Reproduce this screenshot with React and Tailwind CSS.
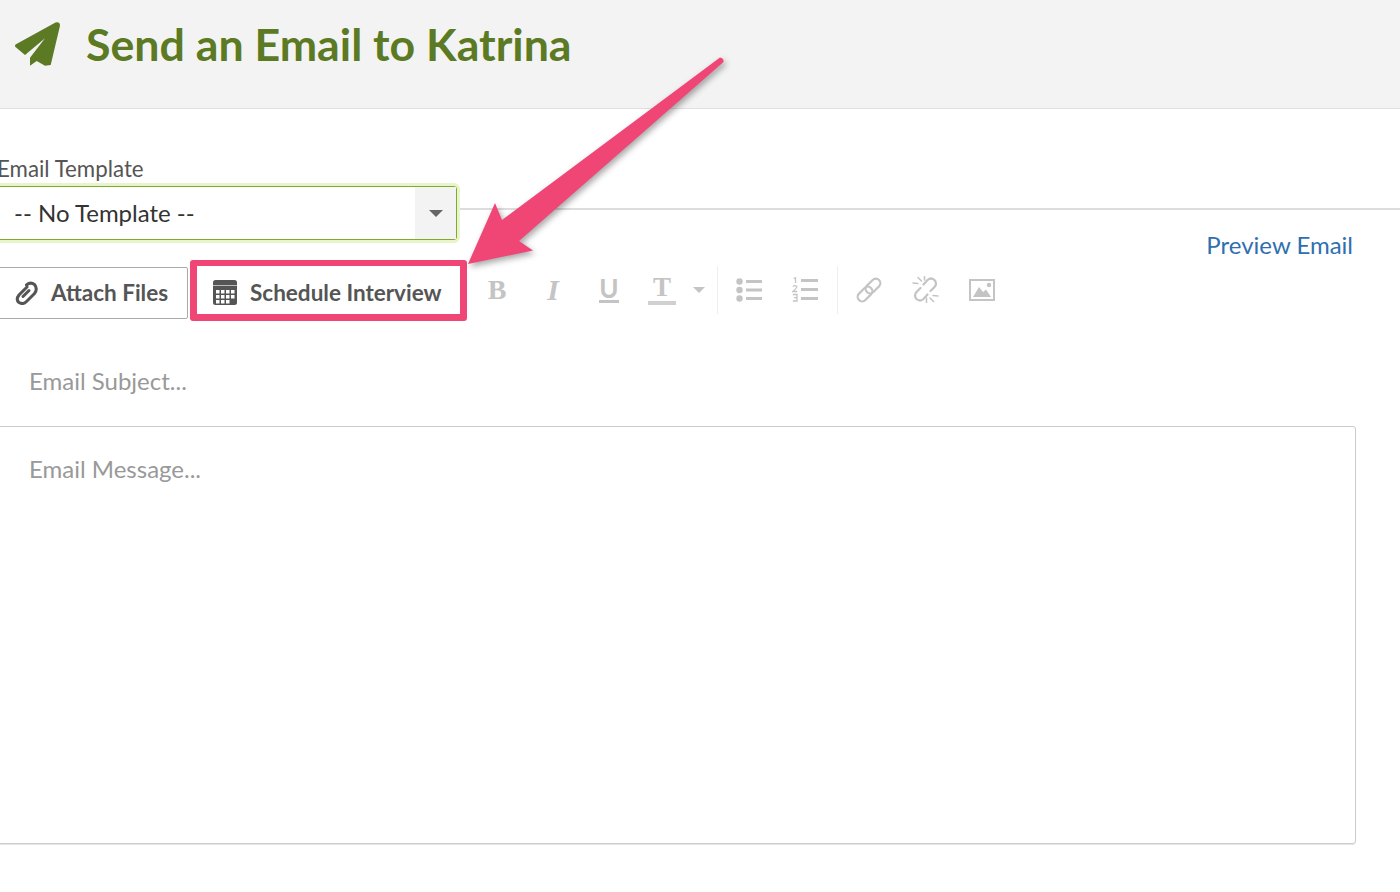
import React from 'react';

const LATO = { fontFamily: '"Lato", "Open Sans", sans-serif' };
const SERIF = { fontFamily: '"Liberation Serif", serif' };

function ChainIcon() {
  return (
    <svg width="26" height="26" viewBox="0 0 26 26" fill="none" stroke="#c4c4c4" strokeWidth="2.200">
      <rect x="12.500" y="0.500" width="9" height="17" rx="4.500" transform="rotate(45 17 9)" />
      <rect x="4.500" y="8.500" width="9" height="17" rx="4.500" transform="rotate(45 9 17)" />
    </svg>
  );
}

function AttachIcon() {
  return (
    <svg width="23" height="24" viewBox="0 0 23 24" fill="none" stroke="#555" strokeWidth="3" strokeLinecap="round">
      <path d="M12 6 L4 14 Q0.500 18.500 4 21.500 Q8 24 11.500 20.500 L19.500 12.500 Q23 8 19.500 3.500 Q15.500 0.500 11.500 4" />
      <path d="M8 15.500 L14 9.500" />
    </svg>
  );
}

function UnlinkIcon() {
  return (
    <svg width="27" height="27" viewBox="0 0 27 27" fill="none" stroke="#c4c4c4" strokeWidth="2.200" strokeLinecap="round">
      <path d="M11.500 8.500 L15.500 4 Q19 1 22.500 4 Q25.500 7.500 22.500 11 L18.500 15" />
      <path d="M15.500 18.500 L11.500 23 Q8 26 4.500 23 Q1.500 19.500 4.500 16 L8.500 12" />
      <g strokeWidth="1.500">
        <path d="M6 1.500 L9.500 5 M1 7 L6 7.500 M21.500 25.500 L18 22 M26 20 L21 19.500 M14.500 22 L14.500 26.500 M12.500 0.500 L12.500 4" />
      </g>
    </svg>
  );
}

function ListIcon() {
  return (
    <svg width="26" height="24" viewBox="0 0 26 24" fill="#c4c4c4">
      <circle cx="3.500" cy="3.500" r="3.200" />
      <circle cx="3.500" cy="12" r="3.200" />
      <circle cx="3.500" cy="20.500" r="3.200" />
      <rect x="10" y="2" width="16" height="3" />
      <rect x="10" y="10.500" width="16" height="3" />
      <rect x="10" y="19" width="16" height="3" />
    </svg>
  );
}

function NumberedIcon() {
  return (
    <svg width="26" height="25" viewBox="0 0 26 25" fill="none" stroke="#c4c4c4" strokeWidth="1.300">
      <path d="M1.500 1.500 L3.500 0.800 L3.500 6" />
      <path d="M0.800 9.500 Q3 7.800 4.800 9.500 Q5 11 0.800 14.500 L5.200 14.500" />
      <path d="M0.800 17.500 L5 17.500 L5 24 L0.800 24 M2 20.700 L5 20.700" />
      <g fill="#c4c4c4" stroke="none">
        <rect x="9" y="2" width="17" height="3" />
        <rect x="9" y="11" width="17" height="3" />
        <rect x="9" y="20" width="17" height="3" />
      </g>
    </svg>
  );
}

function ImageIcon() {
  return (
    <svg width="26" height="22" viewBox="0 0 26 22" fill="none">
      <rect x="1" y="1" width="24" height="20" stroke="#c4c4c4" strokeWidth="2" />
      <circle cx="20" cy="6" r="2.200" fill="#c4c4c4" />
      <path d="M4 18 L10 8 L14 13 L17 10.500 L22 18 Z" fill="#c4c4c4" />
    </svg>
  );
}

function CalendarIcon() {
  const cells = [
    [3, 10], [8, 10], [13, 10], [18, 10],
    [3, 15], [8, 15], [13, 15], [18, 15],
    [3, 20], [8, 20], [13, 20],
  ];
  return (
    <svg width="24" height="25" viewBox="0 0 24 25">
      <path d="M2.500 0 H21.500 Q24 0 24 2.500 V22.500 Q24 25 21.500 25 H2.500 Q0 25 0 22.500 V2.500 Q0 0 2.500 0 Z" fill="#555" />
      <rect x="0" y="5" width="24" height="1" fill="#bbb" />
      <g fill="#fff">
        {cells.map(([x, y]) => <rect key={`${x}-${y}`} x={x} y={y} width="3.500" height="3.500" />)}
      </g>
    </svg>
  );
}

function App() {
  return (
    <div className="relative h-[892px] w-[1400px] overflow-hidden bg-white" style={LATO}>
      {/* header */}
      <div className="flex h-[109px] items-start border-b border-[#e0e0e0] bg-[#f3f3f3]">
        <svg width="46" height="45" viewBox="15 22 46 45" className="ml-[15px] mt-[22px]">
          <path
            d="M55.500 22.500 L15.500 44.500 Q14.500 46 15.500 47 L25 55 L45 38.300 L30 57.700 L30 65.700 L36.700 61 L45 65.700 L50.700 65 L60 25.700 Q60 21.500 55.500 22.500 Z"
            fill="#5b7a23"
          />
        </svg>
        <h1 className="ml-[25px] mt-[15px] text-[44.700px] font-bold leading-[58px] text-[#5b7a23]">
          Send an Email to Katrina
        </h1>
      </div>

      {/* template select */}
      <div className="ml-[-3px] mt-[47px] text-[22.300px] leading-[26px] text-[#555]">Email Template</div>
      <div className="mt-[4px] flex items-center">
        <div className="ml-[-10px] flex h-[54px] w-[467px] items-stretch rounded-[3px] border border-[#82a92f] bg-white shadow-[0_0_0_3px_#e8f5cb]">
          <div className="flex-1 pl-[23px] text-[24px] leading-[52px] text-[#333]">-- No Template --</div>
          <div className="flex w-[41px] items-center justify-center bg-[#f3f3f3]">
            <div className="h-0 w-0 border-x-[7px] border-t-[7px] border-x-transparent border-t-[#666]" />
          </div>
        </div>
        <div className="mb-[8px] ml-[3px] h-[2px] flex-1 bg-[#ddd]" />
      </div>

      {/* preview link */}
      <div className="mt-[-9px] pr-[47px] text-right text-[24px] leading-[28px] text-[#2f6fb0]">Preview Email</div>

      {/* toolbar */}
      <div className="mt-[1px] flex items-center">
        <div className="ml-[-12px] mt-[7px] flex h-[52px] w-[200px] items-center self-start rounded-[2px] border-[1.500px] border-[#aaa] pl-[26px] text-[22.500px] font-bold text-[#555]">
          <AttachIcon />
          <span className="ml-[13px]">Attach Files</span>
        </div>
        <div className="ml-[2px] flex h-[61px] w-[277px] items-center rounded-[3px] border-x-[7px] border-b-[7px] border-t-[6px] border-[#ef4676] pl-[16px] pt-[5px] text-[22.500px] font-bold text-[#555]">
          <CalendarIcon />
          <span className="ml-[13px]">Schedule Interview</span>
        </div>

        <div className="mb-[2px] ml-[2px] flex items-center text-[#c4c4c4]">
          <div className="flex w-[56px] justify-center text-[28px] font-bold leading-[30px]" style={SERIF}>B</div>
          <div className="flex w-[56px] justify-center text-[30px] font-bold italic leading-[30px]" style={SERIF}>I</div>
          <div className="flex w-[56px] justify-center">
            <span className="border-b-[3px] border-[#c4c4c4] text-[26px] font-bold leading-[24px]">U</span>
          </div>
          <div className="flex w-[50px] justify-center">
            <span className="border-b-[4px] border-[#d0d0d0] px-[5px] pb-[2px] text-[27px] font-bold leading-[24px]" style={SERIF}>T</span>
          </div>
          <div className="flex w-[24px] justify-center">
            <div className="h-0 w-0 border-x-[6px] border-t-[6px] border-x-transparent border-t-[#c4c4c4]" />
          </div>
          <div className="ml-[6px] h-[48px] w-px bg-[#eee]" />
          <div className="ml-[3px] flex w-[56px] justify-center"><ListIcon /></div>
          <div className="flex w-[56px] justify-center"><NumberedIcon /></div>
          <div className="ml-[4px] h-[48px] w-px bg-[#eee]" />
          <div className="ml-[3px] flex w-[56px] justify-center"><ChainIcon /></div>
          <div className="flex w-[56px] justify-center"><UnlinkIcon /></div>
          <div className="ml-[1px] flex w-[56px] justify-center"><ImageIcon /></div>
        </div>
      </div>

      {/* subject */}
      <div className="mt-[45px] pl-[29px] text-[24px] leading-[30px] text-[#999]">Email Subject...</div>

      {/* message */}
      <div className="ml-[-10px] mt-[30px] h-[418px] w-[1366px] rounded-[3px] border border-[#ccc] pl-[38px] pt-[27px] text-[24px] leading-[30px] text-[#999] shadow-[0_1px_1px_#e5e5e5]">
        Email Message...
      </div>

      {/* annotation arrow */}
      <svg width="300" height="240" viewBox="440 40 300 240" className="absolute left-[440px] top-[40px] drop-shadow-[2px_3px_3px_rgba(0,0,0,0.35)]">
        <path
          d="M720 57.500 Q724 58 723.500 62 L519 241 L533 250.500 L468 264 L495 203 L502 220 Z"
          fill="#ef4676"
        />
      </svg>
    </div>
  );
}

export default App;
